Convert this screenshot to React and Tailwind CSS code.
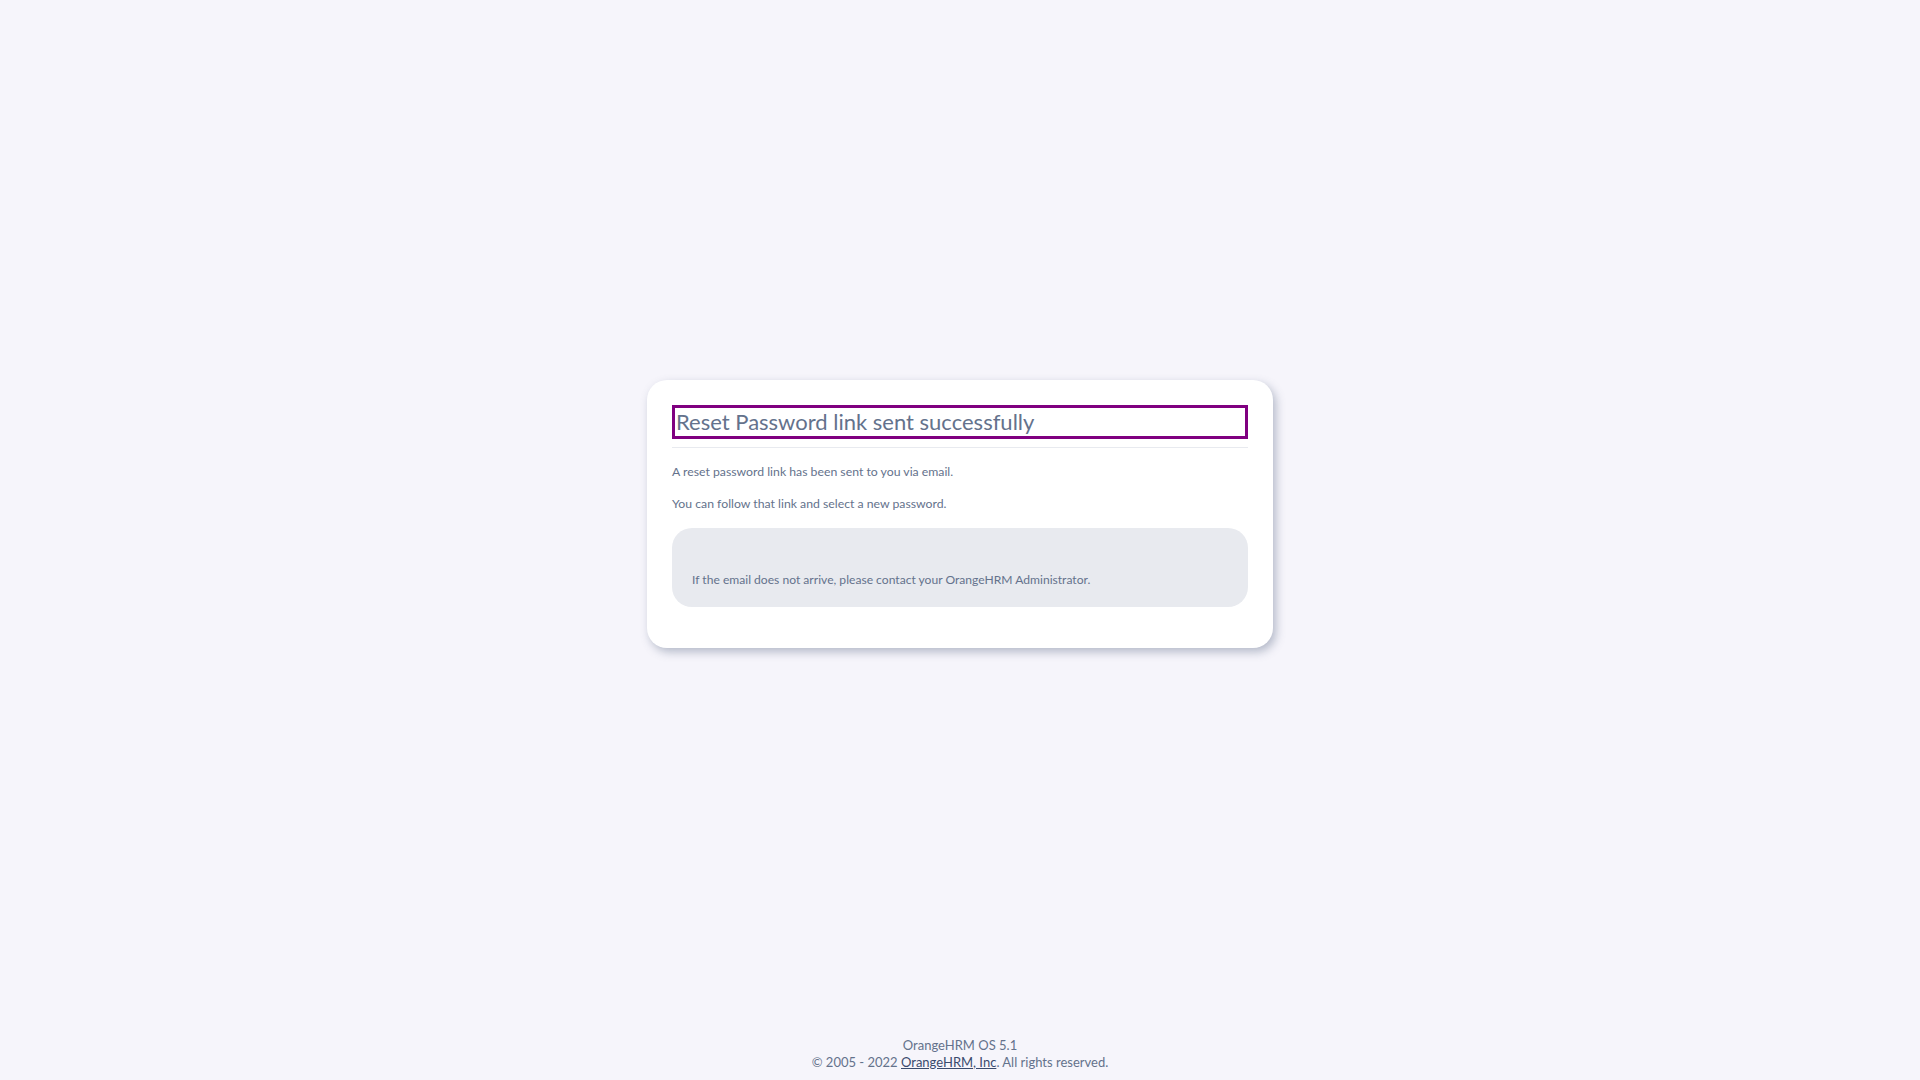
import React from 'react';

function ResetCard() {
  return (
    <div className="w-[626px] rounded-[20px] bg-white px-[25px] pt-[25px] pb-[41px] shadow-[3px_4px_10px_rgba(100,114,140,0.45)]">
      <h6 className="border-[3px] border-[#800080] px-[1px] text-[22px] leading-[28px] font-normal text-[#64728c]">
        Reset Password link sent successfully
      </h6>
      <hr className="mt-[8px] border-0 border-t border-[#e8eaef]" />
      <p className="mt-[15px] text-[12.25px] leading-[18px] text-[#64728c]">
        A reset password link has been sent to you via email.
      </p>
      <p className="mt-[14px] text-[12.25px] leading-[18px] text-[#64728c]">
        You can follow that link and select a new password.
      </p>
      <div className="mt-[15px] rounded-[20px] bg-[#e8eaef] px-[20px] pt-[43px] pb-[18px]">
        <p className="text-[12.1px] leading-[18px] text-[#64728c]">
          If the email does not arrive, please contact your OrangeHRM Administrator.
        </p>
      </div>
    </div>
  );
}

function Footer() {
  return (
    <div className="pt-[9px] pb-[9px] text-center text-[13px] leading-[17px] text-[#64728c]">
      <p>OrangeHRM OS 5.1</p>
      <p>
        © 2005 - 2022{' '}
        <a href="#" className="text-[#3a4b6e] underline">OrangeHRM, Inc</a>. All rights reserved.
      </p>
    </div>
  );
}

export default function App() {
  return (
    <div className="flex h-screen flex-col bg-[#f6f5fb] font-['Lato',_'Noto_Sans',_sans-serif]">
      <main className="flex flex-1 items-center justify-center">
        <ResetCard />
      </main>
      <Footer />
    </div>
  );
}
